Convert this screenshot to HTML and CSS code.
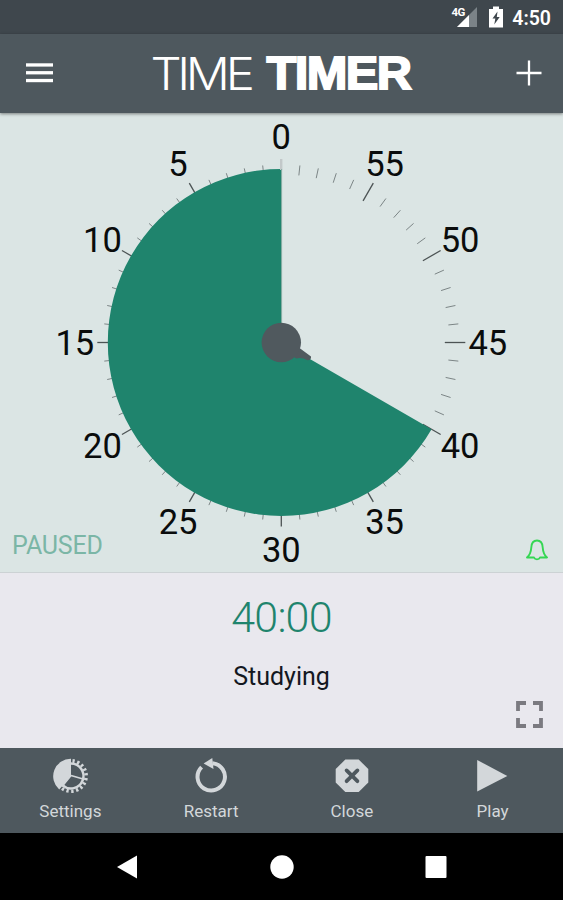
FILE: index.html
```html
<!DOCTYPE html>
<html lang="en">
  <head>
    <meta charset="UTF-8" />
    <meta name="viewport" content="width=device-width, initial-scale=1.0" />
    <title>Time Timer</title>
    <link rel="stylesheet" href="styles.css">
  </head>
  <body>
    <div class="status-bar">
      <svg class="signal" width="28" height="22" viewBox="0 0 28 22">
        <path d="M7 21 L27 1 V21 Z" fill="#7b8388" />
        <path d="M7 21 L19 9 V21 Z" fill="#fff" />
        <text x="1.5" y="10">4G</text>
      </svg>
      <svg class="battery" width="14" height="22" viewBox="0 0 14 22">
        <path d="M4 0.5 H10 V3 H14 V21.5 H0 V3 H4 Z" fill="#fff" />
        <path d="M8.5 5.5 L3.5 12.5 H6.3 L5.3 18.5 L10.7 11 H7.8 Z" fill="#3f474d" />
      </svg>
      <span class="clock">4:50</span>
    </div>

    <header class="app-bar">
      <svg class="menu" width="27" height="20" viewBox="0 0 27 20" fill="#fff">
        <rect y="0.3" width="27" height="3.3" />
        <rect y="8.1" width="27" height="3.3" />
        <rect y="15.9" width="27" height="3.3" />
      </svg>
      <svg class="logo" width="270" height="70" viewBox="0 0 270 70">
        <text class="logo-thin" x="0.5" y="50.5" textLength="100" lengthAdjust="spacingAndGlyphs">TIME</text>
        <text class="logo-bold" x="116.5" y="50" textLength="144" lengthAdjust="spacingAndGlyphs">TIMER</text>
      </svg>
      <svg class="add" width="26" height="26" viewBox="0 0 26 26">
        <path d="M13 0.5 V25.5 M0.5 13 H25.5" stroke="#fff" stroke-width="2.3" />
      </svg>
    </header>

    <main class="dial-area">
      <svg class="dial" width="563" height="460" viewBox="0 0 563 460">
        <g id="ticks"></g>
        <path id="wedge" fill="#1f846d" />
        <rect x="280" y="46" width="2.4" height="11" fill="#c2c8c9" />
        <path d="M281.6 56 V220" stroke="#83aaa1" stroke-width="1" />
        <path class="knob" d="M299.5 235 L311 243.5 Q311.5 247 307.5 247.2 Q302 244 296 245.5 L289 240 Z" />
        <circle class="knob" cx="281.3" cy="229.5" r="19.7" />
        <g id="numbers"></g>
      </svg>
      <div class="dial-footer">
        <span class="state">PAUSED</span>
        <svg width="22" height="22" viewBox="0 0 22 22" fill="none" stroke="#35d653" stroke-width="1.9" stroke-linejoin="round">
          <path d="M1 18.5 C4.5 15.5 5 13 5.3 8.5 C5.5 4 7.5 1.5 11 1.5 C14.5 1.5 16.5 4 16.7 8.5 C17 13 17.5 15.5 21 18.5 H14 C13 21 9 21 8 18.5 Z" />
        </svg>
      </div>
    </main>

    <section class="info">
      <div class="time-left">40:00</div>
      <div class="task">Studying</div>
      <svg class="fullscreen" width="27" height="27" viewBox="0 0 27 27" fill="none" stroke="#7b7a80" stroke-width="3.8">
        <path d="M2 10 V2 H10 M17 2 H25 V10 M25 17 V25 H17 M10 25 H2 V17" />
      </svg>
    </section>

    <div class="toolbar">
      <div class="tool">
        <svg width="36" height="36" viewBox="0 0 36 36">
          <path d="M19 18 V0.8 A17.5 17.5 0 0 0 7.2 31.5 Z" fill="#d3d7da" />
          <g fill="none" stroke="#d3d7da">
            <path d="M19 5.5 A12.5 12.5 0 1 1 10.5 27.2" stroke-width="2.4" />
            <path d="M20.5 2.9 A15.2 15.2 0 1 1 9 29.5" stroke-width="3.6" stroke-dasharray="2.3 2.5" />
            <path d="M19 17.5 L31 21 M19 17.5 L10 28.5" stroke-width="1.7" />
          </g>
        </svg>
        <span>Settings</span>
      </div>
      <div class="tool">
        <svg width="36" height="36" viewBox="0 0 36 36">
          <path d="M8.6 9.1 A13.7 13.7 0 1 0 19.5 5.2" fill="none" stroke="#d3d7da" stroke-width="4" />
          <path d="M10.6 5.6 L19.3 0 L20.5 11 Z" fill="#d3d7da" />
        </svg>
        <span>Restart</span>
      </div>
      <div class="tool">
        <svg width="36" height="36" viewBox="0 0 36 36">
          <path d="M11.3 1.5 H24.7 L34.3 11.1 V24.5 L24.7 34 H11.3 L1.7 24.5 V11.1 Z" fill="#d3d7da" />
          <path d="M12.6 12.4 L23.4 23.2 M23.4 12.4 L12.6 23.2" stroke="#4e585e" stroke-width="3.8" stroke-linecap="round" />
        </svg>
        <span>Close</span>
      </div>
      <div class="tool">
        <svg width="36" height="36" viewBox="0 0 36 36">
          <path d="M2.2 2 L32.3 18 L2.2 33.5 Z" fill="#d3d7da" />
        </svg>
        <span>Play</span>
      </div>
    </div>

    <nav class="nav-bar">
      <svg width="24" height="24" viewBox="0 0 24 24"><path d="M2 12 L22 0.5 V23.5 Z" fill="#fff" /></svg>
      <svg width="24" height="24" viewBox="0 0 24 24"><circle cx="12" cy="12" r="11.7" fill="#fff" /></svg>
      <svg width="24" height="24" viewBox="0 0 24 24"><rect x="1.5" y="1" width="21" height="22" rx="1" fill="#fff" /></svg>
    </nav>

    <script>
      const cx = 281.3;
      const cy = 229.5;
      const minutesLeft = 40;
      const ticks = document.getElementById("ticks");
      const numbers = document.getElementById("numbers");

      // minutes run counter-clockwise from the top
      function point(minute, r) {
        const a = (minute * Math.PI) / 30;
        return [cx - r * Math.sin(a), cy - r * Math.cos(a)];
      }

      let tickLines = "";
      let labels = "";
      for (let m = 1; m < 60; m++) {
        const major = m % 5 === 0;
        const [x1, y1] = point(m, major ? 163.5 : 168);
        const [x2, y2] = point(m, major ? 184 : 178);
        tickLines += `<line class="${major ? "major" : "minor"}" x1="${x1}" y1="${y1}" x2="${x2}" y2="${y2}" />`;
      }
      for (let m = 0; m < 60; m += 5) {
        const [x, y] = point(m, 206.5);
        labels += `<text x="${x}" y="${y + 12.6}">${m}</text>`;
      }
      ticks.innerHTML = tickLines;
      numbers.innerHTML = labels;

      const radius = 173.5;
      const [sx, sy] = point(0, radius);
      const [ex, ey] = point(minutesLeft, radius);
      document
        .getElementById("wedge")
        .setAttribute("d", `M${cx} ${cy} L${sx} ${sy} A${radius} ${radius} 0 ${minutesLeft > 30 ? 1 : 0} 0 ${ex} ${ey} Z`);
    </script>
  </body>
</html>
```
FILE: styles.css
```css
* {
  box-sizing: border-box;
}
body {
  margin: 0;
  width: 563px;
  height: 900px;
  display: flex;
  flex-direction: column;
  font-family: Roboto, sans-serif;
  background-color: #000;
  overflow: hidden;
}
svg {
  display: block;
  flex-shrink: 0;
}
/* Status bar */
.status-bar {
  height: 34px;
  display: flex;
  justify-content: flex-end;
  align-items: center;
  padding: 0 12px 0 0;
  background-color: #3f474d;
  color: #fff;
}
.signal text {
  font-size: 11.5px;
  font-weight: 700;
  fill: #fff;
  letter-spacing: -0.5px;
}
.battery {
  margin: 0 9px 0 11px;
}
.clock {
  font-size: 19.5px;
  font-weight: 600;
  line-height: 33px;
  padding-top: 2px;
}
/* App bar */
.app-bar {
  height: 79px;
  display: flex;
  justify-content: space-between;
  align-items: center;
  padding: 0 21px 0 26px;
  background-color: #4e585e;
  box-shadow: 0 1px 3px rgba(0, 0, 0, 0.45);
  position: relative;
  z-index: 1;
}
.menu {
  margin-bottom: 2px;
}
.add {
  margin-bottom: 1px;
}
.logo text {
  font-family: Inter, sans-serif;
  font-size: 45.5px;
  fill: #fff;
}
.logo .logo-thin {
  font-weight: 300;
  letter-spacing: -4px;
}
.logo .logo-bold {
  font-family: "Liberation Sans", Arial, sans-serif;
  font-size: 46.5px;
  font-weight: 700;
  letter-spacing: -1.5px;
  stroke: #fff;
  stroke-width: 1.8px;
}
/* Dial */
.dial-area {
  height: 460px;
  position: relative;
  background-color: #dbe5e4;
  border-bottom: 1px solid #ccd2d4;
}
.major {
  stroke: #4c5354;
  stroke-width: 1.3;
}
.minor {
  stroke: #7c8586;
  stroke-width: 1;
}
.knob {
  fill: #50595e;
}
#numbers text {
  font-size: 34.5px;
  fill: #0a0c0c;
  text-anchor: middle;
}
.dial-footer {
  position: absolute;
  left: 12px;
  right: 15px;
  bottom: 11px;
  height: 32px;
  display: flex;
  justify-content: space-between;
  align-items: center;
}
.dial-footer svg {
  margin-top: 10px;
}
.state {
  font-size: 25px;
  letter-spacing: -0.2px;
  color: #7bb6a6;
}
/* Current timer */
.info {
  height: 175px;
  position: relative;
  padding-top: 19px;
  text-align: center;
  background-color: #e9e8ee;
}
.time-left {
  font-size: 43px;
  font-weight: 300;
  letter-spacing: -0.8px;
  line-height: 50px;
  color: #1f846d;
}
.task {
  margin-top: 20px;
  font-size: 25px;
  line-height: 30px;
  color: #14181f;
}
.fullscreen {
  position: absolute;
  right: 20px;
  bottom: 20px;
}
/* Bottom toolbar */
.toolbar {
  height: 85px;
  display: grid;
  grid-template-columns: repeat(4, 1fr);
  background-color: #4e585e;
}
.tool {
  display: flex;
  flex-direction: column;
  align-items: center;
  padding-top: 10px;
  font-size: 17px;
  line-height: 20px;
  color: #d3d7da;
}
.tool span {
  margin-top: 7px;
}
.nav-bar {
  flex: 1;
  display: flex;
  justify-content: center;
  align-items: center;
  gap: 130.5px;
  background-color: #000;
}
```
